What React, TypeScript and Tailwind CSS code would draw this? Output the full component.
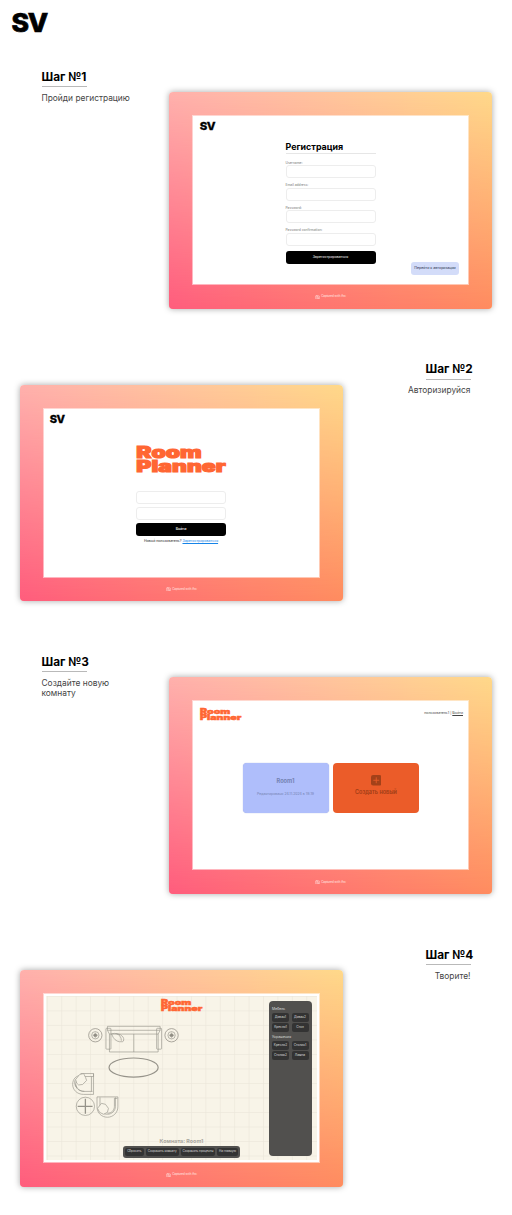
import type { ReactNode } from "react";

function SVLogo({ className }: { className: string }) {
  return (
    <svg viewBox="0 0 36 20" className={`overflow-visible ${className}`} preserveAspectRatio="none">
      <text x="-0.5" y="19.6" fontSize="26" fontWeight="800" letterSpacing="-1.2" textLength="35.5" lengthAdjust="spacingAndGlyphs" stroke="#000" strokeWidth="0.7" className="font-['Inter',sans-serif]">
        SV
      </text>
    </svg>
  );
}

function RoomLogo({ className }: { className: string }) {
  return (
    <svg viewBox="0 0 90 27" className={`overflow-visible ${className}`} preserveAspectRatio="none" fill="#ff6633" stroke="#ff6633" strokeWidth="1" fontSize="15.6" fontWeight="900">
      <text x="0.3" y="12.3" textLength="65.5" lengthAdjust="spacingAndGlyphs" className="font-['Inter',sans-serif]">Room</text>
      <text x="0.3" y="26.3" textLength="89.5" lengthAdjust="spacingAndGlyphs" className="font-['Inter',sans-serif]">Planner</text>
    </svg>
  );
}

function Frame({ children }: { children: ReactNode }) {
  return (
    <div className="relative isolate flex h-[216.5px] w-[323px] shrink-0 flex-col overflow-hidden rounded-[4px] bg-linear-to-r from-[#ffb1ad] to-[#ffd98a] px-[23px] pt-[23px]">
      <div className="absolute inset-0 -z-10 bg-linear-to-r from-[#ff5c7c] to-[#ff8b5f] [mask-image:linear-gradient(to_bottom,transparent,black)]" />
      <div className="h-[170px] w-[277px] border border-white/50 bg-white bg-clip-padding">{children}</div>
      <div className="flex h-[23px] items-center justify-center gap-[1px] text-[2.9px] text-white/80">
        <svg viewBox="0 0 12 10" className="h-[4px] w-[5px]" fill="none" stroke="currentColor" strokeWidth="1">
          <path d="M1 3h2l1-2h4l1 2h2v6H1z" />
          <circle cx="6" cy="5.5" r="2.2" />
          <path d="M2 0l8 10" />
        </svg>
        <span>Captured with Arc</span>
      </div>
    </div>
  );
}

function Step({ n, text, right, children }: { n: number; text: ReactNode; right?: boolean; children: ReactNode }) {
  return (
    <section className={`flex h-[292.7px] shrink-0 pr-5 pl-5 ${right ? "flex-row" : "flex-row-reverse"}`}>
      <div className="mt-[24px] h-[216.5px] rounded-[4px] shadow-[0_0_6px_rgba(0,0,0,0.35)]">
        <Frame>{children}</Frame>
      </div>
      <div className={`flex flex-1 flex-col ${right ? "items-end pr-[21px]" : "items-start pl-[21.5px]"}`}>
        <div className="flex h-[19px] w-[45.5px] items-center border-b border-[#b9b9b9] pt-[1.2px] text-[11.8px] font-bold whitespace-nowrap text-black">
          Шаг №{n}
        </div>
        <div className={`mt-[5.6px] text-[8.4px] leading-[10.5px] text-[#444] ${right ? "pr-[0.5px] text-right" : ""}`}>{text}</div>
      </div>
    </section>
  );
}

function Field({ label }: { label: string }) {
  return (
    <label className="flex h-[22.6px] flex-col">
      <span className="h-[4.8px] text-[3.3px] leading-[4px] text-[#777]">{label}</span>
      <span className="h-[13px] w-full rounded-[3px] border border-[#ededed]" />
    </label>
  );
}

function Register() {
  return (
    <div className="relative h-full">
      <SVLogo className="absolute top-[6px] left-[6.5px] h-[8px] w-[15.5px]" />
      <div className="ml-[92.5px] flex w-[90px] flex-col pt-[24px]">
        <h2 className="flex h-[14px] items-center border-b border-[#e6e6e6] text-[8.9px] font-bold text-black">Регистрация</h2>
        <div className="mt-[6.5px]">
          <Field label="Username:" />
          <Field label="Email address:" />
          <Field label="Password:" />
          <Field label="Password confirmation:" />
        </div>
        <button className="h-[13px] rounded-[3px] bg-black text-[3.5px] leading-none text-white">Зарегистрироваться</button>
      </div>
      <button className="absolute right-[9px] bottom-[9px] h-[13px] w-[48px] rounded-[3px] bg-[#d3dcf9] text-[3.6px] leading-none whitespace-nowrap text-[#26304d]">
        Перейти к авторизации
      </button>
    </div>
  );
}

function Login() {
  return (
    <div className="relative h-full">
      <SVLogo className="absolute top-[6px] left-[6px] h-[8px] w-[15px]" />
      <div className="ml-[92px] flex w-[90px] flex-col pt-[37.5px]">
        <RoomLogo className="h-[27px] w-[90px]" />
        <div className="mt-[18px] h-[13px] rounded-[3px] border border-[#ededed]" />
        <div className="mt-[3px] h-[13px] rounded-[3px] border border-[#ededed]" />
        <button className="mt-[3px] h-[13px] rounded-[3px] bg-black text-[3.6px] leading-none font-medium text-white">Войти</button>
        <p className="mt-[3px] text-center text-[3.5px] leading-[5px] whitespace-nowrap text-[#222]">
          Новый пользователь? <span className="text-[#1684e8] underline">Зарегистрироваться</span>
        </p>
      </div>
    </div>
  );
}

function Rooms() {
  return (
    <div className="flex h-full flex-col">
      <div className="flex h-[61.5px] items-start justify-between pt-[7px] pr-[5px] pl-[7px]">
        <RoomLogo className="h-[12.5px] w-[41.5px]" />
        <p className="mt-[2.5px] text-[3.5px] leading-[5px] whitespace-nowrap text-[#444]">
          пользователь1 | <span className="underline">Выйти</span>
        </p>
      </div>
      <div className="flex gap-[4.5px] pl-[49.5px]">
        <div className="flex h-[50px] w-[86px] flex-col items-center rounded-[4px] bg-[#afbefb] text-[#7583b3] shadow-[0_0_1px_#8998d8]">
          <b className="mt-[14.5px] text-[5.7px] leading-[7px] font-bold">Room1</b>
          <span className="mt-[8px] text-[3.5px] leading-[5px]">Редактировано 24.11.2024 в 19:19</span>
        </div>
        <div className="flex h-[50px] w-[86px] flex-col items-center rounded-[4px] bg-[#eb5c29] text-[#a03c16]">
          <svg viewBox="0 0 10 10" className="mt-[12.5px] h-[10.5px] w-[10.5px]">
            <rect width="10" height="10" rx="2" fill="#a44119" />
            <path d="M5 2.2v5.6M2.2 5h5.6" stroke="#eb5c29" strokeWidth="0.8" />
          </svg>
          <span className="mt-[3.3px] text-[5.5px] leading-[7px] font-semibold">Создать новый</span>
        </div>
      </div>
    </div>
  );
}

function FloorPlan() {
  return (
    <svg viewBox="46 996 271 165" className="absolute inset-0 h-full w-full" fill="none" stroke="#96938a" strokeWidth="0.65">
      <defs>
        <pattern id="grid" x="60.5" y="1010.5" width="14.5" height="14.6" patternUnits="userSpaceOnUse">
          <path d="M0 0.4H14.5M0.4 0V14.6" stroke="#eae6da" strokeWidth="0.7" />
        </pattern>
      </defs>
      <rect x="46" y="996" width="272" height="166" fill="url(#grid)" stroke="none" />
      {[94.8, 171.5].map((x) => (
        <g key={x}>
          <circle cx={x} cy="1035.5" r="6.7" strokeWidth="0.8" />
          <circle cx={x} cy="1035.5" r="3.7" />
          <circle cx={x} cy="1035.5" r="1.6" fill="#8c8980" />
          <path d={`M${x - 3} 1035.5h6M${x} 1032.5v6`} strokeWidth="0.4" />
        </g>
      ))}
      <g>
        <path d="M107 1026.5h53v4h-53zM107 1030.5l2 3.8h49l2-3.8M109 1034.3v18h49v-18M133.5 1034.3v18" />
        <rect x="105.5" y="1028.5" width="5" height="21" rx="0.7" />
        <rect x="156.5" y="1028.5" width="5" height="21" rx="0.7" />
        <path d="M111 1034c4-1 9 0 11.5 3 1.5 2 1 5-.5 5-4 .5-7-1-9-4zM116 1034c3 1 5 3 5 7" />
      </g>
      <ellipse cx="133.3" cy="1068" rx="24.7" ry="9.6" strokeWidth="1.2" />
      <g>
        <path d="M93 1074v21H83c-7 0-11-5-11-10 0-6 4-9 8-9M80 1074h13v3H83M92 1092H84c-5 0-8-3-9-7M76 1081c-3 6 1 11 8 11M91 1077v15M75 1080c-2 2-1 6 1 8" />
        <path d="M75 1080l4-5 4-1 2 4 1 3-4 4-4 .5-2-2z" fill="#f8f4e8" />
      </g>
      <g>
        <circle cx="84.8" cy="1107" r="9.2" />
        <path d="M77 1107h15M84.8 1099.5v15" strokeWidth="1.3" />
      </g>
      <g>
        <path d="M96.5 1097.5h21v10c0 6-5 10.5-10.5 10.5s-10.5-4-10.5-10.5zM99.5 1098v11M115 1098v9c0 5-4 8-8 8-3 0-5-1-7-3M117 1099h-3v8c0 4-3 7-7 7" />
        <path d="M97 1109l4-5 4 1 3 4-1 4-4 2-4-2z" fill="#f8f4e8" />
      </g>
    </svg>
  );
}

function PanelGroup({ title, items }: { title: string; items: string[] }) {
  return (
    <div>
      <div className="h-[6.5px] text-[3.5px] leading-[5px] text-[#ddd]">{title}</div>
      <div className="grid grid-cols-2 gap-x-[2.5px] gap-y-[1.8px]">
        {items.map((item) => (
          <div key={item} className="flex h-[8.5px] items-center justify-center rounded-[2px] bg-[#333] text-[3.2px] leading-none whitespace-nowrap text-[#ddd]">
            {item}
          </div>
        ))}
      </div>
    </div>
  );
}

function Editor() {
  return (
    <div className="h-full p-[2px]">
      <div className="relative h-full overflow-hidden bg-[#f8f4e8]">
        <FloorPlan />
        <RoomLogo className="absolute top-[3px] left-[114.5px] h-[12.5px] w-[41.5px]" />
        <aside className="absolute top-[5px] right-[5px] flex h-[154.5px] w-[43.5px] flex-col gap-[2.7px] rounded-[4px] bg-[#51504e] px-[3.5px] pt-[5.5px]">
          <PanelGroup title="Мебель" items={["Диван1", "Диван2", "Кресло1", "Стол"]} />
          <PanelGroup title="Украшения" items={["Кресло2", "Столик1", "Столик2", "Лампа"]} />
        </aside>
        <div className="absolute bottom-[2.5px] left-[77px] flex w-[117px] flex-col items-center">
          <span className="mb-[1px] text-[5.4px] leading-[7px] font-bold text-[#aaa79f]">Комната: Room1</span>
          <div className="flex h-[12px] w-full items-center justify-between rounded-[3px] bg-[#51504e] px-[2px] text-[3px] leading-none whitespace-nowrap text-[#ddd]">
            <span className="flex h-[8px] w-[18.5px] items-center justify-center rounded-[2px] bg-[#333]">Сбросить</span>
            <span className="flex h-[8px] w-[33.5px] items-center justify-center rounded-[2px] bg-[#333]">Сохранить комнату</span>
            <span className="flex h-[8px] w-[34px] items-center justify-center rounded-[2px] bg-[#333]">Сохранить проценты</span>
            <span className="flex h-[8px] w-[21px] items-center justify-center rounded-[2px] bg-[#333]">На главную</span>
          </div>
        </div>
      </div>
    </div>
  );
}

export default function App() {
  return (
    <main className="flex h-[1215px] w-[512px] flex-col overflow-hidden bg-white font-['Inter','Noto_Sans',sans-serif]">
      <header className="h-[68px] shrink-0 pt-[12px] pl-[12px]">
        <SVLogo className="h-[20px] w-[36px]" />
      </header>
      <Step n={1} text="Пройди регистрацию"><Register /></Step>
      <Step n={2} text="Авторизируйся" right><Login /></Step>
      <Step n={3} text={<>Создайте новую<br />комнату</>}><Rooms /></Step>
      <Step n={4} text="Творите!" right><Editor /></Step>
    </main>
  );
}
